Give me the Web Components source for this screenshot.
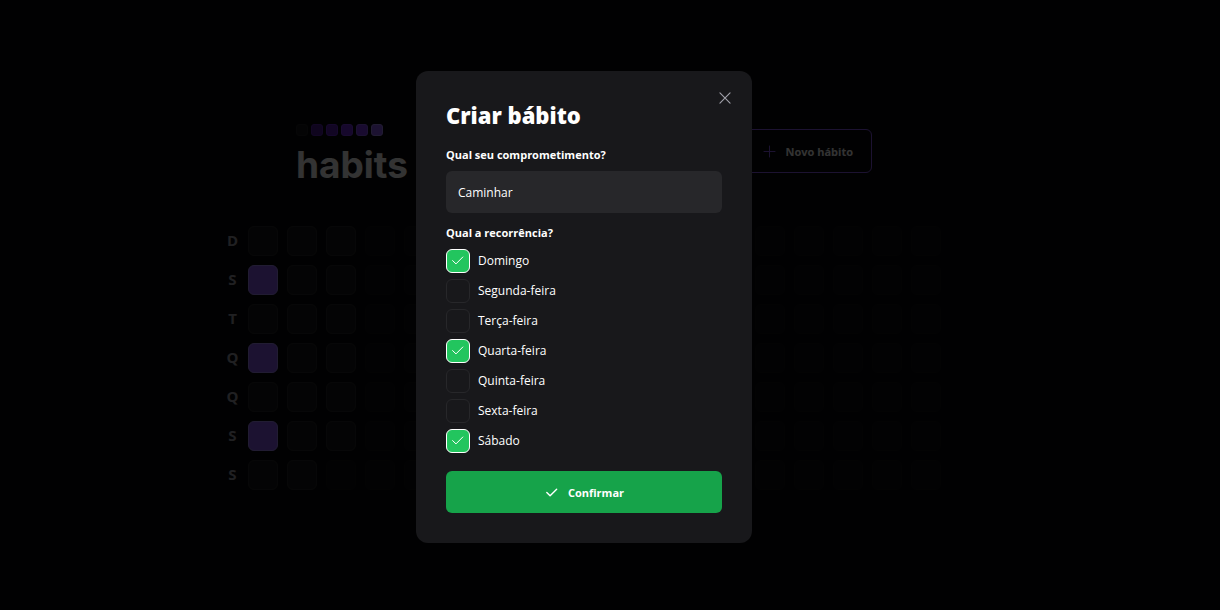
<!DOCTYPE html>
<html lang="pt-BR">
<head>
<meta charset="utf-8">
<meta name="viewport" content="width=device-width, initial-scale=1">
<title>Habits</title>
<style>
  html { background: #09090b; }
  body { margin: 0; color: #fff; font-family: "Open Sans", "Noto Sans", sans-serif; font-size: 12px; line-height: 16px; }
</style>
</head>
<body>
<habits-app></habits-app>
<script>
class HabitsLogo extends HTMLElement {
  connectedCallback() {
    this.attachShadow({ mode: 'open' }).innerHTML = `
      <style>
        :host { display: flex; flex-direction: column; height: 54px; }
        .dots { display: flex; gap: 3px; }
        i { box-sizing: border-box; width: 12px; height: 12px; border-radius: 3px; background: var(--c); border: 1px solid var(--b); }
        strong { font: 700 37px/42px Inter, sans-serif; margin-top: 8px; }
      </style>
      <div class="dots" aria-hidden="true">
        <i style="--c:#18181b;--b:#1f1f23"></i><i style="--c:#4c1d95;--b:#5b21b6"></i>
        <i style="--c:#5b21b6;--b:#6d28d9"></i><i style="--c:#6d28d9;--b:#7c3aed"></i>
        <i style="--c:#7c3aed;--b:#8b5cf6"></i><i style="--c:#8b5cf6;--b:#a78bfa"></i>
      </div>
      <strong>habits</strong>`;
  }
}
customElements.define('habits-logo', HabitsLogo);

class NewHabitButton extends HTMLElement {
  connectedCallback() {
    this.attachShadow({ mode: 'open' }).innerHTML = `
      <style>
        :host { display: block; }
        button { display: flex; align-items: center; gap: 9px; height: 44px; padding: 2px 18px 0; border: 1px solid #8b5cf6; border-radius: 6px; background: none; color: inherit; font: 700 11px/16px "Open Sans", sans-serif; }
        svg { color: #8b5cf6; margin-bottom: 2px; }
      </style>
      <button type="button">
        <svg width="15" height="15" viewBox="0 0 15 15" fill="none" stroke="currentColor" stroke-linecap="round" aria-hidden="true"><path d="M7.5 2v11M2 7.5h11"/></svg>
        <slot></slot>
      </button>`;
  }
}
customElements.define('new-habit-button', NewHabitButton);

class HabitDay extends HTMLElement {
  connectedCallback() {
    this.attachShadow({ mode: 'open' }).innerHTML = `
      <style>
        :host { display: block; box-sizing: border-box; width: 30px; height: 30px; border: 1px solid #27272a; border-radius: 6px; background: #18181b; }
        :host([done]) { background: #8b5cf6; border-color: #a78bfa; }
        :host([future]) { opacity: .25; }
      </style>`;
  }
}
customElements.define('habit-day', HabitDay);

class SummaryTable extends HTMLElement {
  connectedCallback() {
    const weekdays = ['D', 'S', 'T', 'Q', 'Q', 'S', 'S'];
    const weeks = 18, elapsed = 20, done = [1, 3, 5];
    const days = Array.from({ length: weeks * 7 }, (_, i) =>
      `<habit-day${done.includes(i) ? ' done' : ''}${i >= elapsed ? ' future' : ''}></habit-day>`).join('');
    this.attachShadow({ mode: 'open' }).innerHTML = `
      <style>
        :host { display: flex; }
        div { display: grid; grid-template-rows: repeat(7, 30px); grid-auto-flow: column; gap: 9px; }
        span { box-sizing: border-box; width: 30px; padding: 0 1px 2px 0; display: flex; align-items: center; justify-content: center; color: #a1a1aa; font-size: 15px; font-weight: 700; }
      </style>
      <div>${weekdays.map(d => `<span>${d}</span>`).join('')}</div>
      <div>${days}</div>`;
  }
}
customElements.define('summary-table', SummaryTable);

class DayCheckbox extends HTMLElement {
  connectedCallback() {
    this.attachShadow({ mode: 'open' }).innerHTML = `
      <style>
        :host { display: block; }
        label { display: flex; align-items: center; gap: 8px; height: 24px; }
        .box { display: grid; width: 24px; height: 24px; }
        .box > * { grid-area: 1 / 1; }
        input { appearance: none; box-sizing: border-box; width: 24px; height: 24px; margin: 0; border: 1px solid #27272a; border-radius: 6px; background: #18181b; }
        input:checked { background: #22c55e; border-color: #fff; }
        svg { place-self: center; pointer-events: none; visibility: hidden; }
        input:checked + svg { visibility: visible; }
      </style>
      <label>
        <span class="box">
          <input type="checkbox" ${this.hasAttribute('checked') ? 'checked' : ''}>
          <svg width="16" height="16" viewBox="0 0 16 16" fill="none" stroke="#fff" stroke-linecap="round" stroke-linejoin="round" aria-hidden="true"><path d="M12.8 4 6 10.9 2.6 7.6"/></svg>
        </span>
        <slot></slot>
      </label>`;
  }
}
customElements.define('day-checkbox', DayCheckbox);

class HabitForm extends HTMLElement {
  connectedCallback() {
    this.attachShadow({ mode: 'open' }).innerHTML = `
      <style>
        :host { display: block; }
        form, fieldset { display: flex; flex-direction: column; }
        fieldset { border: 0; margin: 12px 0 0; padding: 0; min-width: 0; }
        label, legend { font-size: 11px; font-weight: 700; padding: 0; }
        input { box-sizing: border-box; width: 100%; height: 42px; margin: 8px 0 0; padding: 0 12px; border: 0; border-radius: 6px; background: #27272a; color: #fff; font: inherit; outline: 0; }
        .days { display: flex; flex-direction: column; gap: 6px; margin-top: 8px; }
        button { display: flex; align-items: center; justify-content: center; gap: 9px; height: 42px; margin-top: 18px; padding: 2px 0 0; border: 0; border-radius: 6px; background: #16a34a; color: #fff; font: inherit; font-size: 11px; font-weight: 700; }
        button svg { margin-bottom: 2px; }
      </style>
      <form>
        <label for="title">Qual seu comprometimento?</label>
        <input id="title" type="text" value="Caminhar">
        <fieldset>
          <legend>Qual a recorrência?</legend>
          <div class="days">
            <day-checkbox checked>Domingo</day-checkbox>
            <day-checkbox>Segunda-feira</day-checkbox>
            <day-checkbox>Terça-feira</day-checkbox>
            <day-checkbox checked>Quarta-feira</day-checkbox>
            <day-checkbox>Quinta-feira</day-checkbox>
            <day-checkbox>Sexta-feira</day-checkbox>
            <day-checkbox checked>Sábado</day-checkbox>
          </div>
        </fieldset>
        <button type="submit">
          <svg width="15" height="15" viewBox="0 0 256 256" fill="none" stroke="currentColor" stroke-width="24" stroke-linecap="round" stroke-linejoin="round" aria-hidden="true"><path d="M216 72 104 184l-56-56"/></svg>
          Confirmar
        </button>
      </form>`;
  }
}
customElements.define('habit-form', HabitForm);

class ModalDialog extends HTMLElement {
  connectedCallback() {
    this.attachShadow({ mode: 'open' }).innerHTML = `
      <style>
        :host { position: fixed; inset: 0; display: flex; align-items: center; justify-content: center; padding: var(--page-inset); background: rgba(0, 0, 0, .8); }
        section { position: relative; box-sizing: border-box; width: 100%; max-width: 336px; padding: 30px; border-radius: 12px; background: #18181b; }
        h2 { margin: 0 0 18px; font-size: 22px; line-height: 28px; font-weight: 800; }
        button { position: absolute; top: 18px; right: 18px; width: 18px; height: 18px; padding: 0; border: 0; background: none; color: #a1a1aa; }
        svg { display: block; }
      </style>
      <section role="dialog" aria-modal="true" aria-labelledby="heading">
        <button type="button" aria-label="Fechar">
          <svg width="18" height="18" viewBox="0 0 256 256" fill="none" stroke="currentColor" stroke-width="16" stroke-linecap="round" aria-hidden="true"><path d="M200 56 56 200M200 200 56 56"/></svg>
        </button>
        <h2 id="heading"><slot name="title"></slot></h2>
        <slot></slot>
      </section>`;
  }
}
customElements.define('modal-dialog', ModalDialog);

class HabitsApp extends HTMLElement {
  connectedCallback() {
    this.attachShadow({ mode: 'open' }).innerHTML = `
      <style>
        :host { --page-inset: 4px 52px 0 0; box-sizing: border-box; display: flex; align-items: center; justify-content: center; min-height: 100vh; padding: var(--page-inset); }
        main { box-sizing: border-box; width: 100%; max-width: 768px; padding: 0 18px; display: flex; flex-direction: column; gap: 48px; }
        header { width: 100%; max-width: 576px; margin: 0 auto; display: flex; align-items: center; justify-content: space-between; }
      </style>
      <main>
        <header>
          <habits-logo></habits-logo>
          <new-habit-button>Novo hábito</new-habit-button>
        </header>
        <summary-table></summary-table>
      </main>
      <modal-dialog>
        <span slot="title">Criar bábito</span>
        <habit-form></habit-form>
      </modal-dialog>`;
  }
}
customElements.define('habits-app', HabitsApp);
</script>
</body>
</html>
